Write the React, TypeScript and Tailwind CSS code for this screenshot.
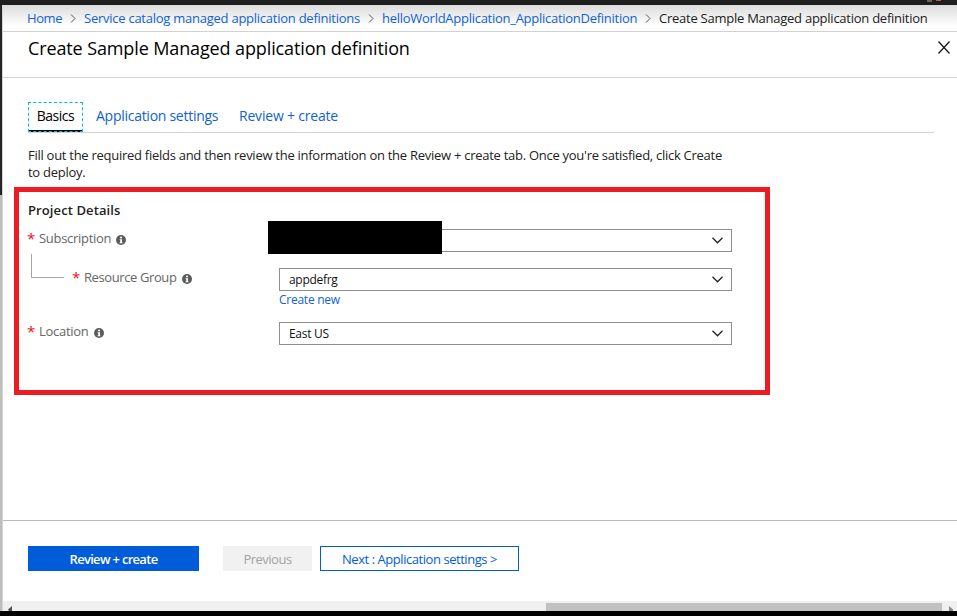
import type { ReactNode } from "react";

function Separator() {
  return (
    <svg className="h-[9px] w-[6px] shrink-0" viewBox="0 0 6 9" fill="none" stroke="#555" strokeWidth="1">
      <path d="M1 0.5 5 4.5 1 8.5" />
    </svg>
  );
}

function InfoIcon() {
  return (
    <svg className="mt-[2px] h-[10px] w-[10px] shrink-0" viewBox="0 0 10 10">
      <circle cx="5" cy="5" r="5" fill="#5c5c5c" />
      <path d="M4 1.7h2v1.6H4zM3.6 4.2H6v3.2h.6v.9H3.5v-.9h.7V5.1h-.6z" fill="#fff" />
    </svg>
  );
}

function Label({ children, className = "" }: { children: ReactNode; className?: string }) {
  return (
    <div className={`mt-[8px] flex h-[22px] items-center whitespace-nowrap text-[13px] tracking-[-0.29px] text-[#666] ${className}`}>
      <span className="-ml-px w-[12px] shrink-0 pb-[2px] text-[15px] text-[#e81123]">*</span>
      {children}
      <InfoIcon />
    </div>
  );
}

function Select({ children }: { children?: ReactNode }) {
  return (
    <div className="flex h-[23px] w-[453px] items-center justify-between border border-[#8e8e8e] pr-[8px] pl-[9px] text-[12px] tracking-[-0.3px] text-[#111]">
      <span>{children}</span>
      <svg className="h-[7px] w-[11px]" viewBox="0 0 11 7" fill="none" stroke="#222" strokeWidth="1.3">
        <path d="M.5 .8 5.5 5.8 10.5 .8" />
      </svg>
    </div>
  );
}

export default function App() {
  return (
    <div className="flex h-[616px] w-[957px] flex-col overflow-hidden bg-black font-['Open_Sans','Noto_Sans',sans-serif]">
      <div className="flex h-[5px] shrink-0 justify-end bg-[#1e1e1e] pr-[16px]">
        <span className="h-[2px] w-[5px] bg-[#6b6653]" />
        <span className="ml-1 h-px w-[5px] bg-[#b3603c]" />
      </div>
      <div className="flex h-[606px] shrink-0">
        <div className="flex w-[2px] shrink-0 flex-col">
          <div className="h-[190px] bg-[#242424]" />
          <div className="grow bg-[#bdbdbd]" />
        </div>
        <div className="flex w-[955px] flex-col border-l border-[#d6d6d6] bg-white">
          <nav className="flex h-[27px] shrink-0 items-center border-b border-[#d2d2d2] bg-linear-to-b from-[#dcdcdc] to-white to-80% pt-px pl-[24px] text-[13px] tracking-[-0.25px] whitespace-nowrap text-[#0f62d6]">
            <a className="w-[43px] tracking-[-0.4px]">Home</a>
            <Separator />
            <a className="ml-[8px] w-[284px]">Service catalog managed application definitions</a>
            <Separator />
            <a className="ml-[8px] w-[263px] tracking-[-0.27px]">helloWorldApplication_ApplicationDefinition</a>
            <Separator />
            <span className="ml-[8px] text-[#222]">Create Sample Managed application definition</span>
          </nav>
          <header className="flex h-[46px] shrink-0 items-start justify-between border-b border-[#d2d2d2] pr-[7px] pl-[25px]">
            <h1 className="mt-[4px] text-[18px] leading-[25px] tracking-[-0.12px] whitespace-nowrap text-black">Create Sample Managed application definition</h1>
            <svg className="mt-[9px] h-[13px] w-[12px]" viewBox="0 0 12 13" fill="none" stroke="#111" strokeWidth="1.2">
              <path d="M.5 .5 11.5 12.5M11.5 .5 .5 12.5" />
            </svg>
          </header>
          <main className="flex h-[442px] shrink-0 flex-col">
            <div className="mt-[24px] ml-[25px] flex h-[31px] w-[906px] shrink-0 items-start border-b border-[#d2d2d2] text-[14px] tracking-[-0.27px] whitespace-nowrap text-[#0f62d6]">
              <div className="h-[30px] w-[55px] border border-dashed border-[#00b7f0] bg-linear-to-t from-black from-[2px] to-transparent to-[2px] bg-no-repeat bg-origin-border text-black">
                <div className="text-center leading-[26px] tracking-[-0.5px]">Basics</div>
              </div>
              <a className="ml-[13px] w-[143px] leading-[28px]">Application settings</a>
              <a className="leading-[28px] tracking-[-0.2px]">Review + create</a>
            </div>
            <p className="mt-[14px] ml-[25px] h-[35px] shrink-0 text-[13px] leading-[17px] tracking-[-0.27px] whitespace-nowrap text-[#222]">
              Fill out the required fields and then review the information on the Review + create tab. Once you're satisfied, click Create
              <br />
              to deploy.
            </p>
            <section className="mt-[5px] ml-[11px] h-[208px] w-[756px] shrink-0 border-5 border-[#ed1c24] pl-[9px]">
              <h2 className="mt-[9px] h-[19px] text-[13px] leading-[19px] font-semibold tracking-[0.1px] text-[#222]">Project Details</h2>
              <div className="flex h-[39px]">
                <Label className="w-[240px]">
                  <span className="mr-[5px]">Subscription</span>
                </Label>
                <div className="flex">
                  <div className="z-10 mt-[1px] h-[33px] w-[174px] bg-black" />
                  <div className="mt-[9px] -ml-[163px]">
                    <Select />
                  </div>
                </div>
              </div>
              <div className="flex h-[54px]">
                <div className="-mt-[5px] mr-[9px] ml-[3px] h-[24px] w-[33px] border-b border-l border-[#a6a6a6]" />
                <Label className="w-[206px]">
                  <span className="mr-[6px] tracking-[-0.4px]">Resource Group</span>
                </Label>
                <div className="mt-[9px]">
                  <Select>appdefrg</Select>
                  <a className="block text-[12px] leading-[18px] tracking-[-0.25px] text-[#0f62d6]">Create new</a>
                </div>
              </div>
              <div className="flex">
                <Label className="w-[251px]">
                  <span className="mr-[6px]">Location</span>
                </Label>
                <div className="mt-[9px]">
                  <Select>East US</Select>
                </div>
              </div>
            </section>
          </main>
          <footer className="flex h-[81px] shrink-0 items-start border-t border-[#bababa] pt-[25px] pl-[25px] text-[13px] whitespace-nowrap">
            <button className="h-[25px] w-[171px] bg-[#015cda] pt-[2px] font-semibold tracking-[-0.7px] text-white">Review + create</button>
            <button className="ml-[24px] h-[25px] w-[89px] bg-[#f1f1f1] pt-[2px] tracking-[-0.5px] text-[#a3a3a3]">Previous</button>
            <button className="ml-[8px] h-[25px] w-[199px] border border-[#015cda] pt-[2px] font-medium tracking-[-0.45px] text-[#015cda]">{"Next : Application settings >"}</button>
          </footer>
          <div className="flex h-[10px] shrink-0 overflow-hidden bg-[#f0f0f0]">
            <svg className="mt-[5px] ml-[5px] h-[5px] w-[4px]" viewBox="0 0 4 5">
              <path d="M4 0v5H1L0 3.5z" fill="#505050" />
            </svg>
            <div className="mt-[2px] ml-[534px] h-[8px] w-[396px] bg-[#c1c1c1]" />
            <svg className="mt-[5px] ml-[7px] h-[5px] w-[4px]" viewBox="0 0 4 5">
              <path d="M0 0v5h4V3.5z" fill="#8a8a8a" />
            </svg>
          </div>
        </div>
      </div>
    </div>
  );
}
